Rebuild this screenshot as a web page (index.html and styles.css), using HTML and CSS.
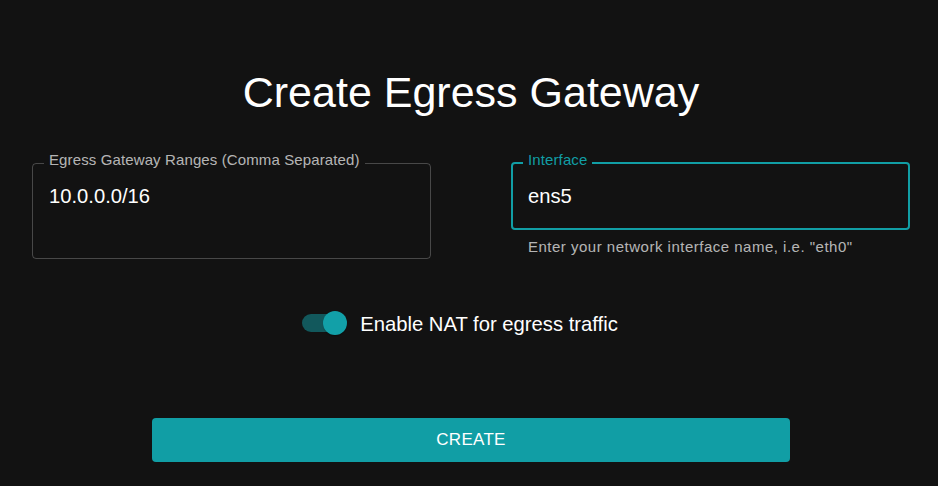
FILE: index.html
```html
<!DOCTYPE html>
<html lang="en">
<head>
<meta charset="utf-8">
<title>Create Egress Gateway</title>
<link rel="stylesheet" href="styles.css">
</head>
<body>
<main class="page">
  <h1 class="title">Create Egress Gateway</h1>
  <div class="fields">
    <div class="field-group">
      <div class="field field-multiline">
        <span class="field-label">Egress Gateway Ranges (Comma Separated)</span>
        <div class="field-value">10.0.0.0/16</div>
      </div>
    </div>
    <div class="field-group">
      <div class="field field-focused">
        <span class="field-label">Interface</span>
        <div class="field-value">ens5</div>
      </div>
      <p class="helper">Enter your network interface name, i.e. "eth0"</p>
    </div>
  </div>
  <div class="toggle-row">
    <span class="switch"><span class="switch-track"></span><span class="switch-thumb"></span></span>
    <span class="toggle-label">Enable NAT for egress traffic</span>
  </div>
  <button class="create-btn" type="button">CREATE</button>
</main>
</body>
</html>
```
FILE: styles.css
```css
* { box-sizing: border-box; }
html, body {
  margin: 0;
  background: #121212;
  color: #fff;
  font-family: "Liberation Sans", Arial, sans-serif;
}
.page {
  padding: 66px 28px 0 32px;
  height: 486px;
}
.title {
  margin: 0;
  font-size: 43px;
  line-height: 52px;
  font-weight: 400;
  text-align: center;
}
.fields {
  margin-top: 44px;
  display: grid;
  grid-template-columns: 399px 399px;
  column-gap: 80px;
  align-items: start;
}
.field {
  position: relative;
  border: 1px solid rgba(255, 255, 255, 0.23);
  border-radius: 4px;
  padding: 18px 16px;
}
.field-multiline {
  height: 96px;
  margin-top: 1px;
}
.field-focused {
  border: 2px solid #119ea5;
  padding: 18px 15px;
}
.field-label {
  position: absolute;
  top: -12px;
  left: 11px;
  padding: 0 5px;
  background: #121212;
  font-size: 15px;
  line-height: 15px;
  color: rgba(255, 255, 255, 0.7);
  letter-spacing: 0.12px;
  white-space: nowrap;
}
.field-focused .field-label {
  color: #119ea5;
  left: 10px;
}
.field-value {
  font-size: 20.2px;
  line-height: 28px;
  color: #fff;
}
.helper {
  margin: 4px 0 0 17px;
  font-size: 15px;
  line-height: 25px;
  letter-spacing: 0.5px;
  color: rgba(255, 255, 255, 0.7);
}
.toggle-row {
  margin-top: 45px;
  height: 38px;
  display: flex;
  align-items: center;
  justify-content: center;
  gap: 13px;
  padding-right: 22px;
}
.switch {
  position: relative;
  width: 45px;
  height: 24px;
  flex: none;
}
.switch-track {
  position: absolute;
  left: 0;
  top: 3px;
  width: 42px;
  height: 18px;
  border-radius: 9px;
  background: rgba(17, 158, 165, 0.5);
}
.switch-thumb {
  position: absolute;
  right: 0;
  top: 0;
  width: 24px;
  height: 24px;
  border-radius: 50%;
  background: #12a0a8;
  box-shadow: 0 2px 1px -1px rgba(0,0,0,0.2), 0 1px 1px rgba(0,0,0,0.14);
}
.toggle-label {
  font-size: 20.25px;
  line-height: 23px;
  padding-top: 2px;
}
.create-btn {
  display: block;
  margin: 76px auto 0;
  width: 638px;
  height: 44px;
  border: 0;
  border-radius: 4px;
  background: #119ea5;
  color: #fff;
  font-family: "Liberation Sans", Arial, sans-serif;
  font-size: 17px;
  letter-spacing: 0.3px;
  cursor: pointer;
}
```
